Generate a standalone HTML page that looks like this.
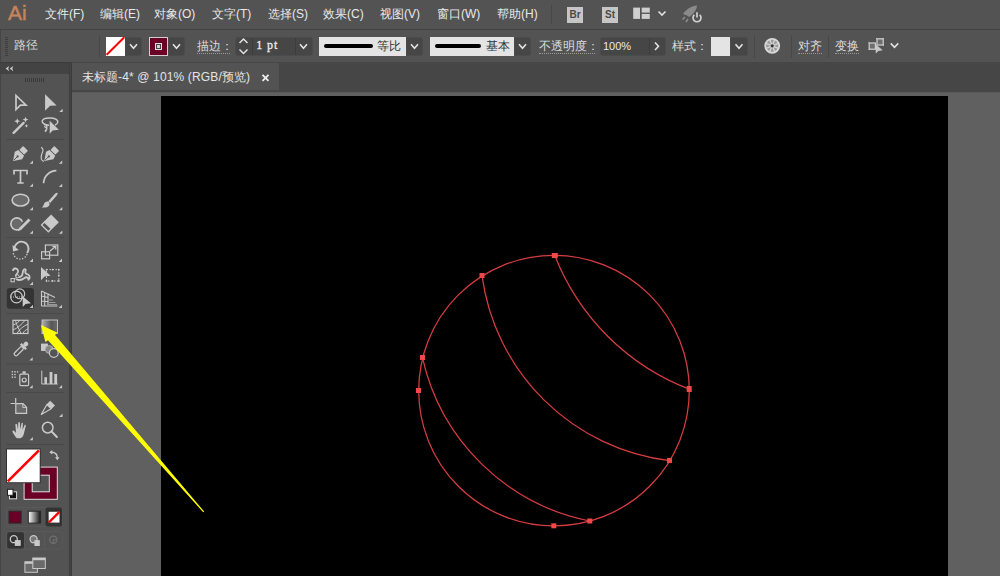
<!DOCTYPE html>
<html><head><meta charset="utf-8">
<style>
*{margin:0;padding:0;box-sizing:border-box}
html,body{width:1000px;height:576px;overflow:hidden;background:#535353;font-family:"Liberation Sans",sans-serif;color:#e6e6e6}
.a{position:absolute}
#menubar{left:0;top:0;width:1000px;height:29px;background:#535353}
#menubar .m{position:absolute;top:7px;font-size:12px;line-height:14px;color:#e8e8e8;white-space:nowrap}
#ctrl{left:0;top:29px;width:1000px;height:34px;background:#535353;border-top:1px solid #434343;border-bottom:1px solid #3f3f3f;box-shadow:inset 1px 0 #454545}
#panel{left:0;top:62px;width:69px;height:514px;background:#535353;border-left:1px solid #454545}
#phead{left:0;top:62px;width:69px;height:12px;background:#434343;border-top:1px solid #3b3b3b}
#divider{left:69px;top:62px;width:3px;height:514px;background:linear-gradient(90deg,#3e3e3e 0 1px,#454545 1px 2px,#3b3b3b 2px 3px)}
#tabbar{left:72px;top:62px;width:928px;height:30px;background:#464646}
#tab{left:72px;top:63px;width:207px;height:27px;background:#535353}
#canvas{left:72px;top:92px;width:928px;height:484px;background:#606060;border-top:1px solid #595959}
#artboard{left:161px;top:96px;width:787px;height:480px;background:#000}
.lbl{font-size:12px;line-height:14px;color:#dcdcdc;white-space:nowrap}
.ul{border-bottom:1px dotted #9a9a9a;padding-bottom:0px}
.sep{width:1px;background:#484848}
.chev{background:#464646;border:1px solid #4b4b4b}
.box{background:#464646;border:1px solid #4b4b4b;border-radius:3px}
.light{background:#e4e4e4}
.c{display:inline-block;width:12px;font-style:normal;text-align:center;overflow:visible}
</style></head><body>
<div id="menubar" class="a">
  <div class="a" style="left:8px;top:1px;font-size:21px;line-height:24px;color:#c4835a;-webkit-text-stroke:0.5px #c4835a;letter-spacing:0px">Ai</div>
  <div class="m" style="left:45px"><i class="c">文</i><i class="c">件</i>(F)</div>
  <div class="m" style="left:100px"><i class="c">编</i><i class="c">辑</i>(E)</div>
  <div class="m" style="left:154px"><i class="c">对</i><i class="c">象</i>(O)</div>
  <div class="m" style="left:212px"><i class="c">文</i><i class="c">字</i>(T)</div>
  <div class="m" style="left:268px"><i class="c">选</i><i class="c">择</i>(S)</div>
  <div class="m" style="left:323px"><i class="c">效</i><i class="c">果</i>(C)</div>
  <div class="m" style="left:380px"><i class="c">视</i><i class="c">图</i>(V)</div>
  <div class="m" style="left:437px"><i class="c">窗</i><i class="c">口</i>(W)</div>
  <div class="m" style="left:497px"><i class="c">帮</i><i class="c">助</i>(H)</div>
  <div class="a" style="left:551px;top:5px;width:1px;height:19px;background:#484848"></div>
  <div class="a" style="left:567px;top:7px;width:16px;height:16px;background:#c6c6c6;color:#4a4a4a;font-size:10px;line-height:16px;font-weight:bold;text-align:center">Br</div>
  <div class="a" style="left:602px;top:7px;width:16px;height:16px;background:#c6c6c6;color:#4a4a4a;font-size:10px;line-height:16px;font-weight:bold;text-align:center">St</div>
  <svg class="a" style="left:620px;top:0" width="100" height="29" viewBox="620 0 100 29">
    <rect x="633.2" y="7.6" width="6.8" height="11.3" fill="#cfcfcf"/>
    <rect x="641.7" y="7.6" width="8.1" height="5" fill="#cfcfcf"/>
    <rect x="641.7" y="13.9" width="8.1" height="5" fill="#cfcfcf"/>
    <path d="M658.5 11.5 L662 15 L665.5 11.5" stroke="#e0e0e0" stroke-width="1.6" fill="none"/>
    <path d="M683 14 C686 9 692 6 697 5.5 C696.5 10 694 14 689 17 L687 15.5 Z" fill="#8a8a8a"/>
    <path d="M685 17 L682.5 19.5 M688 19 L686 22" stroke="#8a8a8a" stroke-width="1.6"/>
    <circle cx="697" cy="17.5" r="5" fill="#535353"/>
    <path d="M694.3 14.8 A4 4 0 1 0 699.7 14.8" stroke="#d0d0d0" stroke-width="1.7" fill="none"/>
    <line x1="697" y1="12.3" x2="697" y2="17.5" stroke="#d0d0d0" stroke-width="1.7"/>
  </svg>
</div>
<div id="ctrl" class="a">
  <div class="a" style="left:5px;top:7px;width:3px;height:19px;background:repeating-linear-gradient(#3e3e3e 0 1px,transparent 1px 2px)"></div>
  <div class="a lbl" style="left:14px;top:8px;color:#d4d4d4"><i class="c">路</i><i class="c">径</i></div>
  <div class="a sep" style="left:99px;top:5px;height:23px"></div>
  <div class="a" style="left:106px;top:7px;width:19px;height:19px;background:#fff;overflow:hidden"><div class="a" style="left:-3px;top:8px;width:25px;height:2px;background:#f00;transform:rotate(-45deg)"></div></div>
  <div class="a chev" style="left:125px;top:7px;width:17px;height:19px;border-radius:0 3px 3px 0"></div>
  <div class="a" style="left:149px;top:7px;width:19px;height:19px;background:#6b0026;border:1px solid #d0d0d0"><div class="a" style="left:5px;top:5px;width:7px;height:7px;border:1px solid #e0e0e0;background:#444"><div class="a" style="left:1px;top:1px;width:3px;height:3px;background:#d0d0d0"></div></div></div>
  <div class="a chev" style="left:168px;top:7px;width:17px;height:19px;border-radius:0 3px 3px 0"></div>
  <div class="a lbl ul" style="left:197px;top:9px;width:33px;overflow:visible"><i class="c">描</i><i class="c">边</i><i class="c">：</i></div>
  <div class="a box" style="left:235px;top:7px;width:78px;height:19px"></div>
  <div class="a" style="left:252px;top:8px;width:1px;height:17px;background:#3c3c3c"></div>
  <div class="a" style="left:295px;top:8px;width:1px;height:17px;background:#3c3c3c"></div>
  <div class="a" style="left:0;top:9px;font-family:'Liberation Serif',serif;font-size:12px;line-height:13px;color:#ececec;-webkit-text-stroke:0.3px #ececec"><span class="a" style="left:256.3px">1</span><span class="a" style="left:267px">p</span><span class="a" style="left:274px">t</span></div>
  <div class="a light" style="left:319px;top:7px;width:87px;height:19px"><div class="a" style="left:5px;top:7px;width:49px;height:4px;background:#000;border-radius:2px"></div><div class="a" style="left:58px;top:2px;font-size:12px;line-height:14px;color:#333"><i class="c">等</i><i class="c">比</i></div></div>
  <div class="a chev" style="left:406px;top:7px;width:17px;height:19px;border-radius:0 3px 3px 0"></div>
  <div class="a light" style="left:430px;top:7px;width:84px;height:19px"><div class="a" style="left:5px;top:7px;width:46px;height:4px;background:#000;border-radius:2px"></div><div class="a" style="left:56px;top:2px;font-size:12px;line-height:14px;color:#333"><i class="c">基</i><i class="c">本</i></div></div>
  <div class="a chev" style="left:514px;top:7px;width:17px;height:19px;border-radius:0 3px 3px 0"></div>
  <div class="a lbl ul" style="left:539px;top:9px;width:56px"><i class="c">不</i><i class="c">透</i><i class="c">明</i><i class="c">度</i><i class="c">：</i></div>
  <div class="a box" style="left:600px;top:7px;width:66px;height:19px"></div>
  <div class="a" style="left:649px;top:8px;width:1px;height:17px;background:#3c3c3c"></div>
  <div class="a" style="left:603px;top:10px;font-size:11px;line-height:13px;color:#e8e8e8">100%</div>
  <div class="a lbl" style="left:672px;top:9px"><i class="c">样</i><i class="c">式</i><i class="c">：</i></div>
  <div class="a" style="left:711px;top:7px;width:19px;height:19px;background:#e4e4e4"></div>
  <div class="a chev" style="left:730px;top:7px;width:18px;height:19px;border-radius:0 3px 3px 0"></div>
  <div class="a sep" style="left:754px;top:5px;height:23px"></div>
  <div class="a sep" style="left:791px;top:5px;height:23px"></div>
  <div class="a lbl ul" style="left:798px;top:9px"><i class="c">对</i><i class="c">齐</i></div>
  <div class="a sep" style="left:828px;top:5px;height:23px"></div>
  <div class="a lbl ul" style="left:835px;top:9px"><i class="c">变</i><i class="c">换</i></div>
</div>
<svg class="a" style="left:0;top:29px" width="1000" height="34" viewBox="0 29 1000 34"><path d="M130.0 44.3 L133.5 48.3 L137.0 44.3" stroke="#e2e2e2" stroke-width="1.6" fill="none"/><path d="M173.0 44.3 L176.5 48.3 L180.0 44.3" stroke="#e2e2e2" stroke-width="1.6" fill="none"/><path d="M300.0 44.3 L303.5 48.3 L307.0 44.3" stroke="#e2e2e2" stroke-width="1.6" fill="none"/><path d="M411.0 44.3 L414.5 48.3 L418.0 44.3" stroke="#e2e2e2" stroke-width="1.6" fill="none"/><path d="M519.0 44.3 L522.5 48.3 L526.0 44.3" stroke="#e2e2e2" stroke-width="1.6" fill="none"/><path d="M735.5 44.3 L739 48.3 L742.5 44.3" stroke="#e2e2e2" stroke-width="1.6" fill="none"/><path d="M239.5 43 L243.5 39 L247.5 43" stroke="#e2e2e2" stroke-width="1.5" fill="none"/><path d="M239.5 49.5 L243.5 53.5 L247.5 49.5" stroke="#e2e2e2" stroke-width="1.5" fill="none"/><path d="M655 42.5 L658.5 46.3 L655 50" stroke="#e2e2e2" stroke-width="1.6" fill="none"/><g transform="translate(772.2 45.8)"><circle r="7" fill="#9a9a9a" stroke="#d8d8d8" stroke-width="1.8"/><line x1="0" y1="0" x2="6.01" y2="2.49" stroke="#d4d4d4" stroke-width="1.4"/><line x1="0" y1="0" x2="2.49" y2="6.01" stroke="#d4d4d4" stroke-width="1.4"/><line x1="0" y1="0" x2="-2.49" y2="6.01" stroke="#d4d4d4" stroke-width="1.4"/><line x1="0" y1="0" x2="-6.01" y2="2.49" stroke="#d4d4d4" stroke-width="1.4"/><line x1="0" y1="0" x2="-6.01" y2="-2.49" stroke="#d4d4d4" stroke-width="1.4"/><line x1="0" y1="0" x2="-2.49" y2="-6.01" stroke="#d4d4d4" stroke-width="1.4"/><line x1="0" y1="0" x2="2.49" y2="-6.01" stroke="#d4d4d4" stroke-width="1.4"/><line x1="0" y1="0" x2="6.01" y2="-2.49" stroke="#d4d4d4" stroke-width="1.4"/><circle r="1.6" fill="#333"/></g><g stroke="#c8c8c8" stroke-width="1.3" fill="#6e6e6e"><rect x="877" y="38.8" width="6.2" height="6.2"/><rect x="869.2" y="43" width="6.2" height="6.2"/></g><g stroke="#c8c8c8" stroke-width="1"><line x1="876" y1="38" x2="877.5" y2="39.5"/><line x1="884" y1="38" x2="882.5" y2="39.5"/><line x1="884" y1="46" x2="882.5" y2="44.5"/><line x1="868.5" y1="42.2" x2="870" y2="43.7"/><line x1="868.5" y1="50" x2="870" y2="48.5"/></g><path d="M875.4 43.9 L875.8 53.4 L878.3 51 L882.7 50.2 Z" fill="#c8c8c8"/><path d="M890.75 43.4 L894.5 47.4 L898.25 43.4" stroke="#e2e2e2" stroke-width="1.6" fill="none"/></svg>
<div id="panel" class="a"></div>
<div id="phead" class="a"></div>
<!--PANEL-->
<svg class="a" style="left:0;top:62px" width="69" height="514" viewBox="0 62 69 514">
<path d="M9.2 66 L5.6 68.6 L9.2 71.2 L8.2 68.6 Z M13.3 66 L9.7 68.6 L13.3 71.2 L12.3 68.6 Z" fill="#cdcdcd"/>
<rect x="25" y="78" width="1" height="4" fill="#3a3a3a"/>
<rect x="27" y="78" width="1" height="4" fill="#3a3a3a"/>
<rect x="29" y="78" width="1" height="4" fill="#3a3a3a"/>
<rect x="31" y="78" width="1" height="4" fill="#3a3a3a"/>
<rect x="33" y="78" width="1" height="4" fill="#3a3a3a"/>
<rect x="35" y="78" width="1" height="4" fill="#3a3a3a"/>
<rect x="37" y="78" width="1" height="4" fill="#3a3a3a"/>
<rect x="39" y="78" width="1" height="4" fill="#3a3a3a"/>
<rect x="41" y="78" width="1" height="4" fill="#3a3a3a"/>
<rect x="43" y="78" width="1" height="4" fill="#3a3a3a"/>
<rect x="6" y="139.0" width="58" height="1" fill="#4a4a4a"/>
<rect x="6" y="237.0" width="58" height="1" fill="#4a4a4a"/>
<rect x="6" y="313.0" width="58" height="1" fill="#4a4a4a"/>
<rect x="6" y="363.5" width="58" height="1" fill="#4a4a4a"/>
<rect x="6" y="392.0" width="58" height="1" fill="#4a4a4a"/>
<rect x="6" y="444.0" width="58" height="1" fill="#4a4a4a"/>
<path d="M16 95.5 L16 109.5 L20.5 105.2 L26 105.2 Z" fill="none" stroke="#c9c9c9" stroke-width="1.7" stroke-linejoin="miter"/>
<path d="M45.1 94.2 L45.1 110.8 L50.1 105.8 L56.6 105.6 Z" fill="#c9c9c9"/>
<path d="M62.6 108.7 L62.6 112 L59.300000000000004 112 Z" fill="#c9c9c9"/>
<line x1="13.6" y1="132.8" x2="23.6" y2="122.9" stroke="#c9c9c9" stroke-width="2.4" stroke-linecap="round"/>
<path d="M17.2 118.2 L18.04 120.36 L20.2 121.2 L18.04 122.04 L17.2 124.2 L16.36 122.04 L14.2 121.2 L16.36 120.36 Z" fill="#c9c9c9"/>
<path d="M25.5 116.69999999999999 L26.312 118.788 L28.4 119.6 L26.312 120.41199999999999 L25.5 122.5 L24.688 120.41199999999999 L22.6 119.6 L24.688 118.788 Z" fill="#c9c9c9"/>
<path d="M26.4 124.0 L26.932 125.36800000000001 L28.299999999999997 125.9 L26.932 126.432 L26.4 127.80000000000001 L25.868 126.432 L24.5 125.9 L25.868 125.36800000000001 Z" fill="#c9c9c9"/>
<path d="M49 125.3 C44 125 41.8 122.8 42.3 120.8 C43 118.3 48 117.8 51.5 118 C55.5 118.3 58 119.8 57.8 122 C57.6 123.5 56.5 124.5 55 125" fill="none" stroke="#c9c9c9" stroke-width="1.5"/>
<path d="M44.5 125 C46.5 124.5 47.5 126 46.5 127.3 C45.5 128 44.5 127 45 126.2 M46.8 127 C47 129.5 46 131 44.8 131.5" fill="none" stroke="#c9c9c9" stroke-width="1.4"/>
<path d="M49.7 120.8 L49.7 133.8 L52.6 130.5 L58.8 129.8 Z" fill="#c9c9c9"/>
<g transform="translate(13.1 160.9) rotate(45)"><path d="M0 0 L-5.2 -7.6 L-4.1 -11.4 L4.1 -11.4 L5.2 -7.6 Z" fill="#c9c9c9"/><rect x="-3.4" y="-17.6" width="6.8" height="5.4" rx="0.8" fill="#c9c9c9"/><line x1="0" y1="-1.2" x2="0" y2="-6" stroke="#535353" stroke-width="0.9"/><circle cx="0" cy="-6.4" r="1.1" fill="#535353"/></g>
<path d="M33 160.5 L33 163.8 L29.7 163.8 Z" fill="#c9c9c9"/>
<g transform="translate(44.3 160.9) rotate(45)"><path d="M0 0 L-5.2 -7.6 L-4.1 -11.4 L4.1 -11.4 L5.2 -7.6 Z" fill="#c9c9c9"/><rect x="-3.4" y="-17.6" width="6.8" height="5.4" rx="0.8" fill="#c9c9c9"/><line x1="0" y1="-1.2" x2="0" y2="-6" stroke="#535353" stroke-width="0.9"/><circle cx="0" cy="-6.4" r="1.1" fill="#535353"/></g>
<path d="M62.2 160.5 L62.2 163.8 L58.900000000000006 163.8 Z" fill="#c9c9c9"/>
<path d="M41 147.4 C44.5 148.5 42.5 152 41.5 155 C40.5 158.5 41.5 161 44 161.3" fill="none" stroke="#c9c9c9" stroke-width="1.2"/>
<path d="M14 174.6 L14 170.5 L27 170.5 L27 174.6 M20.5 170.5 L20.5 183 M17.3 183 L23.7 183" fill="none" stroke="#c9c9c9" stroke-width="1.7"/>
<path d="M33 183.5 L33 186.8 L29.7 186.8 Z" fill="#c9c9c9"/>
<path d="M43.6 183.3 A13 13 0 0 1 56.4 170.7" fill="none" stroke="#c9c9c9" stroke-width="1.7"/>
<path d="M62.2 183.7 L62.2 187 L58.900000000000006 187 Z" fill="#c9c9c9"/>
<ellipse cx="20.5" cy="200.1" rx="8.4" ry="5.9" fill="#6a6a6a" stroke="#c9c9c9" stroke-width="1.6"/>
<path d="M33 207.0 L33 210.3 L29.7 210.3 Z" fill="#c9c9c9"/>
<path d="M57.4 192.8 C58 193.5 57.5 194.5 56.5 195.8 L50.2 203 L48.3 201.3 L55 193.8 C56 192.8 56.9 192.4 57.4 192.8 Z" fill="#c9c9c9"/>
<path d="M48.8 202 C50.3 203.8 49.5 206.5 47 207.2 C45 207.8 43 207.5 41.7 207.6 C43 206.5 43.5 205.5 44 204 C44.8 202 47 200.8 48.8 202 Z" fill="#c9c9c9"/>
<path d="M62.3 207.0 L62.3 210.3 L59.0 210.3 Z" fill="#c9c9c9"/>
<path d="M19 229.5 A6 6 0 1 1 22.5 221.8" fill="#6a6a6a" stroke="#c9c9c9" stroke-width="1.6"/>
<path d="M28.5 218.5 L30.5 220.5 L21 230 L17.8 231.3 L19 228 Z" fill="#c9c9c9"/>
<path d="M33 230.39999999999998 L33 233.7 L29.7 233.7 Z" fill="#c9c9c9"/>
<g transform="translate(49.9 223.4) rotate(45)"><rect x="-5.5" y="-7.2" width="11" height="10" fill="#c9c9c9"/><rect x="-4.8" y="2.8" width="9.6" height="4.2" fill="none" stroke="#c9c9c9" stroke-width="1.3"/></g>
<path d="M62.3 230.39999999999998 L62.3 233.7 L59.0 233.7 Z" fill="#c9c9c9"/>
<path d="M14.5 248.5 A7 7 0 1 1 27 253" fill="none" stroke="#c9c9c9" stroke-width="1.8"/>
<path d="M12.5 245 L13 251.5 L18.8 250 Z" fill="#c9c9c9"/>
<path d="M27 254 A7 7 0 0 1 13.3 253" fill="none" stroke="#c9c9c9" stroke-width="1.4" stroke-dasharray="1.3 1.6"/>
<path d="M33 258.59999999999997 L33 261.9 L29.7 261.9 Z" fill="#c9c9c9"/>
<rect x="45.4" y="245" width="12.4" height="10.2" fill="none" stroke="#c9c9c9" stroke-width="1.2"/>
<rect x="41.6" y="251.8" width="8" height="7" fill="none" stroke="#c9c9c9" stroke-width="1.2"/>
<path d="M50 251 L55.5 246.5 M52.3 246.5 L55.8 246.5 L55.8 249.8" fill="none" stroke="#c9c9c9" stroke-width="1.2"/>
<path d="M62 258.59999999999997 L62 261.9 L58.7 261.9 Z" fill="#c9c9c9"/>
<path d="M13 271 C13 268 17 267.5 18 270.5 C18.8 273 17 273.5 16 275 C15 277 19 278 21.5 276 C23.5 274 22 271 24 269.5 C25 268.8 26.5 269.5 25.5 271 C24.5 272.5 26 274 28 274.5 C30 275.5 30.2 278.5 28.5 279.5 C28 277.5 26.5 276.5 24.5 278 C22 280 18.5 280.5 16 279" fill="none" stroke="#c9c9c9" stroke-width="1.8"/>
<circle cx="17.5" cy="276.3" r="1.6" fill="#535353" stroke="#c9c9c9" stroke-width="1"/>
<rect x="11" y="278.5" width="3.3" height="3.3" fill="#535353" stroke="#c9c9c9" stroke-width="1"/>
<line x1="14" y1="279.5" x2="16.3" y2="277.5" stroke="#c9c9c9" stroke-width="1"/>
<path d="M33 281.7 L33 285 L29.7 285 Z" fill="#c9c9c9"/>
<rect x="46.5" y="269.6" width="12.3" height="11.4" fill="none" stroke="#c9c9c9" stroke-width="1" stroke-dasharray="1.5 1.5"/>
<circle cx="46.5" cy="269.6" r="0.9" fill="#c9c9c9"/>
<circle cx="58.8" cy="269.6" r="0.9" fill="#c9c9c9"/>
<circle cx="46.5" cy="281" r="0.9" fill="#c9c9c9"/>
<circle cx="58.8" cy="281" r="0.9" fill="#c9c9c9"/>
<circle cx="52.6" cy="281" r="0.9" fill="#c9c9c9"/>
<circle cx="58.8" cy="275.3" r="0.9" fill="#c9c9c9"/>
<circle cx="52.6" cy="269.6" r="0.9" fill="#c9c9c9"/>
<path d="M41 266.9 L41 280.3 L44.5 276.6 L50.6 275.8 Z" fill="#c9c9c9"/>
<rect x="6.8" y="288.1" width="27.2" height="20.7" rx="3" fill="#343434"/>
<circle cx="16.5" cy="297" r="5.8" fill="none" stroke="#c9c9c9" stroke-width="1.2"/>
<circle cx="19.8" cy="293.8" r="4.9" fill="none" stroke="#c9c9c9" stroke-width="1.1"/>
<line x1="11" y1="297" x2="22" y2="297" stroke="#c9c9c9" stroke-width="0.9" stroke-dasharray="1 1"/>
<path d="M22.7 296.2 L22.7 306.9 L25.6 304 L30.9 303.2 Z" fill="#c9c9c9"/>
<path d="M33 304.7 L33 308 L29.7 308 Z" fill="#c9c9c9"/>
<path d="M41.5 291 L41.5 306 M41.5 291 L48 294 L48 305 M48 294 L55 297.5 M41.5 296 L48 297.5 M41.5 301 L48 301.5 M41.5 306 L57.5 306 M44.7 292.5 L44.7 305.5" fill="none" stroke="#c9c9c9" stroke-width="1.1"/>
<path d="M49 300 L53 300 M49 302.5 L55.5 302.5 M49 304.5 L57 304.5" stroke="#9a9a9a" stroke-width="1.2"/>
<path d="M62 304.7 L62 308 L58.7 308 Z" fill="#c9c9c9"/>
<rect x="13" y="320.3" width="15" height="13.2" fill="none" stroke="#c9c9c9" stroke-width="1.2"/>
<path d="M13 325 C17 324 19 321 20 320.3 M13 330 C18 328 22 324 25 320.3 M17 333.5 C19 329 24 326 28 324 M23 333.5 C24 331 26 329.5 28 329 M15.5 320.3 C16 324 18 327 21 333.5" fill="none" stroke="#c9c9c9" stroke-width="1"/>
<defs><linearGradient id="gt" x1="0" x2="1"><stop offset="0" stop-color="#b0b0b0"/><stop offset="0.6" stop-color="#575757"/><stop offset="1" stop-color="#6a6a6a"/></linearGradient><linearGradient id="gw" x1="0" x2="1"><stop offset="0" stop-color="#fff"/><stop offset="1" stop-color="#111"/></linearGradient></defs>
<rect x="42" y="320" width="15.5" height="13.5" fill="url(#gt)" stroke="#bdbdbd" stroke-width="1"/>
<g transform="translate(19.8 350.2) rotate(45)"><rect x="-1.8" y="-4" width="3.6" height="11" rx="1.5" fill="none" stroke="#c9c9c9" stroke-width="1.3"/><rect x="-3.8" y="-6.3" width="7.6" height="2.3" fill="#c9c9c9"/><rect x="-2.2" y="-11" width="4.4" height="5" rx="2" fill="#c9c9c9"/></g>
<path d="M32.7 357.3 L32.7 360.6 L29.400000000000002 360.6 Z" fill="#c9c9c9"/>
<rect x="41" y="343.6" width="7" height="7.3" fill="#c9c9c9"/>
<circle cx="49.3" cy="349.5" r="3.9" fill="#858585" stroke="#aaaaaa" stroke-width="1"/>
<circle cx="53.8" cy="353" r="4.4" fill="#535353" stroke="#c9c9c9" stroke-width="1.2"/>
<rect x="11.700000000000001" y="371.1" width="1.4" height="1.4" fill="#c9c9c9"/>
<rect x="14.3" y="371.1" width="1.4" height="1.4" fill="#c9c9c9"/>
<rect x="16.900000000000002" y="371.1" width="1.4" height="1.4" fill="#c9c9c9"/>
<rect x="11.700000000000001" y="373.8" width="1.4" height="1.4" fill="#c9c9c9"/>
<rect x="14.3" y="373.8" width="1.4" height="1.4" fill="#c9c9c9"/>
<rect x="11.700000000000001" y="376.5" width="1.4" height="1.4" fill="#c9c9c9"/>
<rect x="14.3" y="376.5" width="1.4" height="1.4" fill="#c9c9c9"/>
<rect x="19.8" y="374.2" width="8.8" height="11.4" rx="1" fill="none" stroke="#c9c9c9" stroke-width="1.2"/>
<rect x="22.5" y="371.3" width="3.2" height="2.4" fill="#c9c9c9"/>
<circle cx="24.2" cy="380" r="2" fill="none" stroke="#c9c9c9" stroke-width="1.2"/>
<path d="M32.7 385.0 L32.7 388.3 L29.400000000000002 388.3 Z" fill="#c9c9c9"/>
<path d="M41.8 370.7 L41.8 384 L57.7 384" fill="none" stroke="#c9c9c9" stroke-width="1"/>
<rect x="44.4" y="377.2" width="2.6" height="6.8" fill="#c9c9c9"/><rect x="49.6" y="372" width="2.8" height="12" fill="#c9c9c9"/><rect x="54.3" y="374" width="2.8" height="10" fill="#c9c9c9"/>
<path d="M62.1 385.0 L62.1 388.3 L58.800000000000004 388.3 Z" fill="#c9c9c9"/>
<path d="M10.6 403.5 L15.2 403.5 M15.7 398 L15.7 403" stroke="#c9c9c9" stroke-width="1.2"/>
<path d="M15.8 403.6 L23 403.6 L26.6 407.2 L26.6 413.4 L15.8 413.4 Z" fill="#6a6a6a" stroke="#c9c9c9" stroke-width="1.2"/>
<path d="M22.8 403.6 L22.8 407.4 L26.6 407.4" fill="none" stroke="#c9c9c9" stroke-width="1"/>
<g transform="translate(41.3 414.4) rotate(45)"><path d="M0 0 L-3 -11 L3 -11 Z" fill="none" stroke="#c9c9c9" stroke-width="1.2" stroke-linejoin="round"/><rect x="-3.4" y="-16" width="6.8" height="5" fill="#c9c9c9"/></g>
<path d="M62.5 413.59999999999997 L62.5 416.9 L59.2 416.9 Z" fill="#c9c9c9"/>
<path d="M16 437.5 C14.5 435 12.5 432.5 12.4 431.2 C12.4 430.2 13.8 430.2 15 431.7 L16 433 L15.4 424.5 C15.3 423.5 16.7 423.3 17 424.3 L18 429.5 L18.3 422.8 C18.4 421.8 19.8 421.8 19.9 422.8 L20.3 429.5 L21.5 423.3 C21.7 422.3 23 422.5 22.9 423.5 L22.5 430 L24.5 425.3 C24.9 424.5 26 424.8 25.8 425.8 L23.8 434 C23 437 21.5 438.3 19.5 438.3 C18 438.3 16.8 438.2 16 437.5 Z" fill="#c9c9c9"/>
<path d="M32.9 437.0 L32.9 440.3 L29.599999999999998 440.3 Z" fill="#c9c9c9"/>
<circle cx="47.7" cy="427.6" r="5.3" fill="none" stroke="#c9c9c9" stroke-width="1.5"/><line x1="51.5" y1="431.4" x2="56.9" y2="437" stroke="#c9c9c9" stroke-width="2" stroke-linecap="round"/>
<rect x="23.6" y="466.6" width="34.2" height="33.2" fill="#dcdcdc"/>
<rect x="24.6" y="467.6" width="32.2" height="31.2" fill="#6b0026"/>
<rect x="31.7" y="474.7" width="18.1" height="17.6" fill="#dcdcdc"/>
<rect x="32.7" y="475.7" width="16.1" height="15.6" fill="#535353"/>
<rect x="6" y="448.5" width="34.7" height="34.7" fill="#333"/>
<rect x="7" y="449.5" width="32.7" height="32.7" fill="#fff"/>
<line x1="7.8" y1="481.4" x2="38.9" y2="450.3" stroke="#ff0000" stroke-width="2.6"/>
<path d="M51.5 452.2 C55 452.2 57.3 454 57.3 458" fill="none" stroke="#c9c9c9" stroke-width="1.5"/><path d="M49.3 452.2 L52.3 450 L52.3 454.4 Z M57.3 460.3 L55 457.3 L59.5 457.3 Z" fill="#c9c9c9"/>
<rect x="9.5" y="491.8" width="7.1" height="7" fill="#111" stroke="#dcdcdc" stroke-width="1"/>
<rect x="7.5" y="489.3" width="5.5" height="6" fill="#fff" stroke="#222" stroke-width="1"/>
<rect x="6.3" y="507.6" width="55.7" height="18.8" rx="2.5" fill="none" stroke="#5a5a5a" stroke-width="1"/>
<rect x="45.5" y="507.6" width="16.5" height="18.8" rx="2" fill="#333"/>
<rect x="9" y="511.2" width="12.1" height="11.9" fill="#6b0026" stroke="#2a2a2a" stroke-width="1"/>
<rect x="28.3" y="511.2" width="12.3" height="11.9" fill="url(#gw)" stroke="#2a2a2a" stroke-width="1"/>
<rect x="48.1" y="511.2" width="11.9" height="11.9" fill="#fff" stroke="#2a2a2a" stroke-width="1"/>
<line x1="48.8" y1="522.5" x2="59.4" y2="511.8" stroke="#f00" stroke-width="2.4"/>
<rect x="6.6" y="531.6" width="56" height="17.6" rx="2.5" fill="none" stroke="#5a5a5a" stroke-width="1"/>
<line x1="24.4" y1="532" x2="24.4" y2="549" stroke="#5a5a5a"/><line x1="44.4" y1="532" x2="44.4" y2="549" stroke="#5a5a5a"/>
<rect x="7.2" y="532.2" width="16.8" height="16.2" rx="2" fill="#333"/>
<circle cx="13.8" cy="539.2" r="3.5" fill="#333" stroke="#c9c9c9" stroke-width="1.3"/><rect x="14.8" y="540.1" width="5.9" height="5.8" fill="#c9c9c9"/>
<circle cx="33.6" cy="539.2" r="3.5" fill="#777" stroke="#c9c9c9" stroke-width="1.3"/><rect x="34.4" y="540.1" width="5.4" height="5.9" fill="#c9c9c9"/>
<circle cx="53.3" cy="539.7" r="3.6" fill="none" stroke="#707070" stroke-width="1.2"/><path d="M53.3 539.7 L56.5 539.7 M53.3 539.7 L53.3 543" stroke="#707070" stroke-width="1"/>
<rect x="24.9" y="561.8" width="12.5" height="10.5" fill="#6a6a6a" stroke="#c9c9c9" stroke-width="1"/><rect x="24.9" y="561.8" width="12.5" height="2" fill="#c9c9c9"/>
<rect x="32.8" y="558" width="12.5" height="10.5" fill="#6a6a6a" stroke="#c9c9c9" stroke-width="1"/><rect x="32.8" y="558" width="12.5" height="2.2" fill="#c9c9c9"/>
</svg>
<!--/PANEL-->
<div id="divider" class="a"></div>
<div id="tabbar" class="a"></div>
<div id="tab" class="a"><div class="a" style="left:10px;top:7px;font-size:12px;line-height:14px;color:#e4e4e4;white-space:nowrap;letter-spacing:0.15px"><i class="c">未</i><i class="c">标</i><i class="c">题</i>-4* @ 101% (RGB/<i class="c">预</i><i class="c">览</i>)</div>
<svg class="a" style="left:188px;top:9px" width="11" height="11"><path d="M2.5 2.9 L8.5 8.9 M8.5 2.9 L2.5 8.9" stroke="#ececec" stroke-width="1.9"/></svg></div>
<div id="canvas" class="a"></div>
<div id="artboard" class="a"></div>
<svg class="a" style="left:0;top:0" width="1000" height="576" viewBox="0 0 1000 576">
  <g fill="none" stroke="#d63d41" stroke-width="1.25">
    <circle cx="554" cy="390.6" r="135.3"/>
    <path d="M554.8 255.6 A235.1 235.1 0 0 0 689.2 389.2"/>
    <path d="M482 275.6 A215.3 215.3 0 0 0 669.4 460.6"/>
    <path d="M422.4 357.4 A214.1 214.1 0 0 0 589.8 521"/>
  </g>
  <g fill="#f04848">
    <rect x="551.8" y="253" width="6" height="5"/>
    <rect x="479.5" y="273" width="5" height="5"/>
    <rect x="420" y="355" width="5" height="5"/>
    <rect x="416" y="388" width="5" height="5"/>
    <rect x="686.7" y="386" width="5" height="6"/>
    <rect x="667" y="458" width="5" height="5"/>
    <rect x="587.3" y="518.5" width="5" height="5"/>
    <rect x="551.3" y="523.3" width="5" height="5"/>
  </g>
  <polygon fill="#ffff00" points="40.9,325 57.1,332.4 55.1,335 204.2,511.6 203.2,512.2 48,340.3 45.4,342"/>
</svg>
</body></html>
